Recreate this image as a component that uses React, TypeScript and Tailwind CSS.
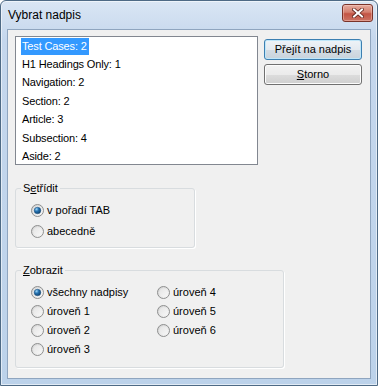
import React, { useId } from 'react';

const listItems = [
  'Test Cases: 2',
  'H1 Headings Only: 1',
  'Navigation: 2',
  'Section: 2',
  'Article: 3',
  'Subsection: 4',
  'Aside: 2',
];

const Radio: React.FC<{ label: React.ReactNode; checked?: boolean }> = ({ label, checked }) => {
  const id = useId().replace(/[^a-zA-Z0-9]/g, '');
  return (
    <div className="flex items-center h-full">
      <svg width="13" height="13" viewBox="0 0 13 13" className="shrink-0">
        <defs>
          <linearGradient id={`ring${id}`} x1="0" y1="0" x2="1" y2="1">
            <stop offset="0" stopColor="#cfcfcf" />
            <stop offset="1" stopColor="#fbfbfb" />
          </linearGradient>
          <linearGradient id={`in${id}`} x1="0" y1="0" x2="1" y2="1">
            <stop offset="0" stopColor="#e4e4e4" />
            <stop offset="1" stopColor="#f7f7f7" />
          </linearGradient>
          <radialGradient id={`dot${id}`} cx="0.35" cy="0.3" r="0.8">
            <stop offset="0" stopColor="#9fd8fa" />
            <stop offset="0.4" stopColor="#2674b3" />
            <stop offset="1" stopColor="#0b3963" />
          </radialGradient>
        </defs>
        <circle cx="6.5" cy="6.5" r="6" fill={`url(#ring${id})`} stroke="#8e8f8f" strokeWidth="1" />
        <circle cx="6.5" cy="6.5" r="4.3" fill={`url(#in${id})`} />
        {checked && <circle cx="6.5" cy="6.5" r="3.3" fill={`url(#dot${id})`} stroke="#1b4f7c" strokeWidth="0.5" />}
      </svg>
      <span className="ml-[3px] whitespace-nowrap">{label}</span>
    </div>
  );
};

export default function App() {
  return (
    <div className="w-[378px] h-[386px] font-['Liberation_Sans',Arial,sans-serif] text-[11px] text-black">
      <div className="w-full h-full flex flex-col rounded-t-[6px] border border-[#4e6a85] bg-[linear-gradient(#dae6f4,#c5d7ed_10%,#bcd2ea)] shadow-[inset_0_0_0_1px_rgba(255,255,255,0.55)]">
        {/* title bar */}
        <div className="h-[28px] flex items-start justify-between pl-[7px] pr-[4px]">
          <span className="text-[12px] leading-[28px] text-black">Vybrat nadpis</span>
          <div className="mt-[3px] w-[31px] h-[18px] rounded-[3px] border border-[#7a3329] bg-[linear-gradient(#e6ab9f,#d4806f_45%,#c35444_55%,#cc7464)] shadow-[inset_0_0_0_1px_rgba(255,220,210,0.4)] flex items-center justify-center">
            <svg width="12" height="10" viewBox="0 0 12 10">
              <path d="M2 1.5 L10 8.5 M10 1.5 L2 8.5" stroke="#5e231b" strokeWidth="3.6" strokeLinecap="square" />
              <path d="M2 1.5 L10 8.5 M10 1.5 L2 8.5" stroke="#ffffff" strokeWidth="2" strokeLinecap="square" />
            </svg>
          </div>
        </div>

        {/* client area */}
        <div className="flex-1 mx-[6px] mb-[6px] border border-[#8fa5bf] bg-[#f0f0f0] flex flex-col">
          <div className="flex items-start">
            <div className="mt-[6px] ml-[7px] w-[243px] h-[129px] border border-[#828790] bg-white pl-[5px] tracking-[-0.15px]">
              {listItems.map((item, i) => (
                <div key={item} className="h-[18.4px] flex items-center">
                  <span
                    className={
                      i === 0
                        ? 'leading-[17px] pl-[1px] pr-[2px] bg-[#3399ff] text-white'
                        : 'leading-[17px] pl-[1px] pr-[2px]'
                    }
                  >
                    {item}
                  </span>
                </div>
              ))}
            </div>

            <div className="ml-[6px] mt-[9px] w-[98px] flex flex-col gap-[4px]">
              <button className="h-[21px] rounded-[3px] border border-[#3c7fb1] bg-[linear-gradient(#eef3f7,#e4eaf0_50%,#d4dde5_50%,#c9d3dc)] shadow-[inset_0_0_0_1px_#bfe6f9] text-[11px] text-black">
                Přejít na nadpis
              </button>
              <button className="h-[21px] rounded-[3px] border border-[#707070] bg-[linear-gradient(#f2f2f2,#ebebeb_50%,#dddddd_50%,#cfcfcf)] shadow-[inset_0_0_0_1px_#fcfcfc] text-[11px] text-black">
                <span className="underline underline-offset-[1px]">S</span>torno
              </button>
            </div>
          </div>

          {/* Setřídit */}
          <fieldset className="mt-[16px] ml-[7px] w-[180px] border border-[#d8dcdf] rounded-[3px] shadow-[1px_1px_0_#ffffff]">
            <legend className="ml-[5px] px-[2px] leading-[14px]">
              S<span className="underline underline-offset-[1px]">e</span>třídit
            </legend>
            <div className="pl-[15px] pt-[5px] pb-[5px]">
              <div className="h-[21px]">
                <Radio label="v pořadí TAB" checked />
              </div>
              <div className="h-[21px]">
                <Radio label="abecedně" />
              </div>
            </div>
          </fieldset>

          {/* Zobrazit */}
          <fieldset className="mt-[15px] ml-[7px] w-[265px] border border-[#d8dcdf] rounded-[3px] shadow-[1px_1px_0_#ffffff]">
            <legend className="ml-[5px] px-[2px] leading-[14px]">
              <span className="underline underline-offset-[1px]">Z</span>obrazit
            </legend>
            <div className="pl-[15px] pt-[6px] pb-[8px] grid grid-flow-col grid-rows-[repeat(4,19px)] auto-cols-[126px]">
              <Radio label="všechny nadpisy" checked />
              <Radio label="úroveň 1" />
              <Radio label="úroveň 2" />
              <Radio label="úroveň 3" />
              <Radio label="úroveň 4" />
              <Radio label="úroveň 5" />
              <Radio label="úroveň 6" />
            </div>
          </fieldset>
        </div>
      </div>
    </div>
  );
}
